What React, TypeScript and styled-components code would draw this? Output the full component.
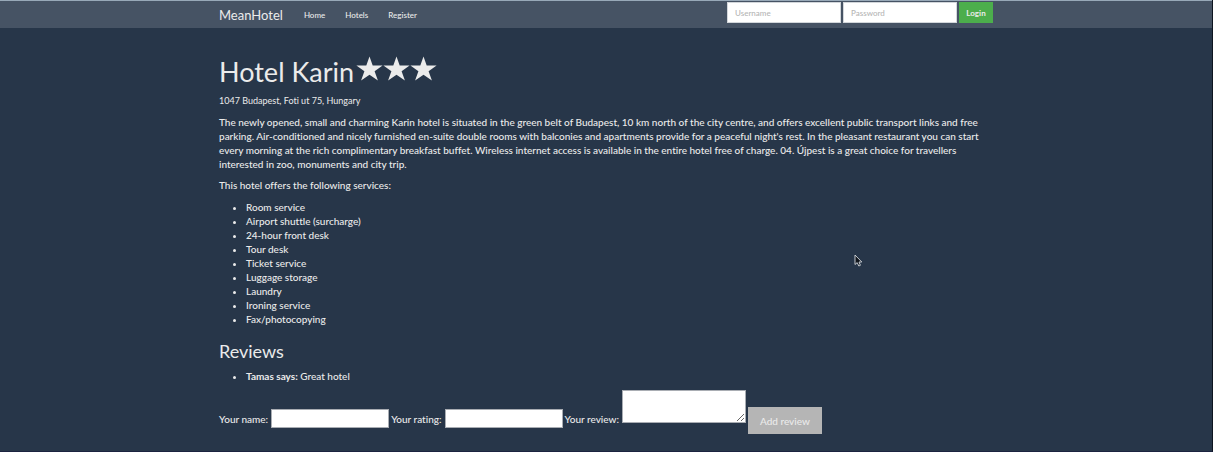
import React from "react";
import styled, { createGlobalStyle } from "styled-components";

const GlobalStyle = createGlobalStyle`
  *, *::before, *::after { box-sizing: border-box; }
  html, body { margin: 0; padding: 0; background: #273649; }
  body {
    font-family: Lato, "Liberation Sans", sans-serif;
    font-size: 10px;
    font-weight: 500;
    line-height: 14px;
    color: #ebebeb;
    font-variant-ligatures: none;
  }
  button, input, textarea { font-family: inherit; font-weight: inherit; }
`;

const Page = styled.div`
  min-height: 100vh;
  border-right: 1px solid #0e1520;
  border-bottom: 1px solid #1b2340;
`;

const Container = styled.div`
  width: 100%;
  max-width: 774px;
  margin: 0 auto;
`;

const Navbar = styled.header`
  background: #465364;
  border-top: 1px solid #98a9b8;
`;

const NavInner = styled(Container)`
  display: flex;
  align-items: flex-start;
  height: 27px;
`;

const Brand = styled.a`
  font-size: 13px;
  font-weight: 400;
  line-height: 28px;
  margin-right: 11px;
  color: #ebebeb;
  text-decoration: none;
`;

const NavLinks = styled.nav`
  display: flex;
  flex: 1;
`;

const NavLink = styled.a`
  padding: 0 10px;
  font-size: 8px;
  line-height: 28px;
  color: #ebebeb;
  text-decoration: none;
`;

const LoginForm = styled.form`
  display: flex;
  gap: 2px;
  padding-top: 1px;
`;

const LoginInput = styled.input`
  width: 114px;
  height: 21px;
  padding: 0 7px;
  border: 1px solid #d3d7db;
  border-radius: 0;
  background: #fff;
  color: #2b3e50;
  font-size: 8px;
  &::placeholder { color: #b5b5b5; opacity: 1; }
`;

const LoginButton = styled.button`
  width: 34px;
  height: 21px;
  padding: 0;
  border: 0;
  background: #4cae4c;
  color: #ebebeb;
  font-size: 8px;
  font-weight: 700;
`;

const Title = styled.h1`
  display: flex;
  align-items: center;
  gap: 2px;
  margin: 28px 0 0;
  font-size: 27px;
  line-height: 32px;
  font-weight: 400;
`;

const Stars = styled.span`
  display: flex;
  padding-bottom: 6px;
`;

const StarIcon = styled.svg`
  display: block;
  width: 27px;
  height: 26px;
  fill: #ebebeb;
`;

const Address = styled.p`
  margin: 6px 0 0;
  font-size: 9px;
  font-weight: 400;
`;

const Text = styled.p`
  margin: 7px 0 0;
`;

const List = styled.ul`
  margin: 8px 0 0;
  padding-left: 27px;
`;

const SectionTitle = styled.h2`
  margin: 15px 0 0;
  font-size: 18px;
  line-height: 20px;
  font-weight: 400;
`;

const ReviewForm = styled.form`
  display: flex;
  align-items: flex-end;
  gap: 2px;
  margin-top: 7px;
`;

const Field = styled.label`
  display: flex;
  align-items: center;
  gap: 3px;
  padding-bottom: 6px;
`;

const ReviewField = styled(Field)`
  align-items: flex-end;
  padding-bottom: 11px;
`;

const ReviewLabel = styled.span`
  line-height: 8px;
`;

const TextInput = styled.input`
  width: 118px;
  height: 19px;
  padding: 0 2px;
  border: 1px solid #a9adb3;
  background: #fff;
  color: #2b3e50;
  font-size: 10px;
`;

const TextArea = styled.textarea`
  display: block;
  width: 124px;
  height: 33px;
  padding: 2px;
  border: 1px solid #a9adb3;
  background: #fff;
  color: #2b3e50;
  font-size: 10px;
`;

const AddButton = styled.button`
  width: 74px;
  height: 27px;
  padding: 0;
  border: 0;
  background: #b5b5b5;
  color: #ebebeb;
  font-size: 10px;
`;

const Pointer = styled.svg`
  position: absolute;
  left: 854px;
  top: 254px;
  width: 9px;
  height: 13px;
  pointer-events: none;
`;

const services = [
  "Room service",
  "Airport shuttle (surcharge)",
  "24-hour front desk",
  "Tour desk",
  "Ticket service",
  "Luggage storage",
  "Laundry",
  "Ironing service",
  "Fax/photocopying",
];

const Star = () => (
  <StarIcon viewBox="0 0 27 26" aria-hidden="true">
    <path d="M13.5 0.5 L16.7 9.4 H26.6 L18.6 15.2 L21.9 24.5 L13.5 18.8 L5.1 24.5 L8.4 15.2 L0.4 9.4 H10.3 Z" />
  </StarIcon>
);

export default function App() {
  return (
    <Page>
      <GlobalStyle />
      <Navbar>
        <NavInner>
          <Brand href="#">MeanHotel</Brand>
          <NavLinks>
            <NavLink href="#home">Home</NavLink>
            <NavLink href="#hotels">Hotels</NavLink>
            <NavLink href="#register">Register</NavLink>
          </NavLinks>
          <LoginForm onSubmit={(e) => e.preventDefault()}>
            <LoginInput type="text" placeholder="Username" aria-label="Username" />
            <LoginInput type="password" placeholder="Password" aria-label="Password" />
            <LoginButton type="submit">Login</LoginButton>
          </LoginForm>
        </NavInner>
      </Navbar>
      <Container as="main">
        <Title>
          Hotel Karin
          <Stars role="img" aria-label="3 stars">
            <Star />
            <Star />
            <Star />
          </Stars>
        </Title>
        <Address>1047 Budapest, Foti ut 75, Hungary</Address>
        <Text>
          The newly opened, small and charming Karin hotel is situated in the green belt of Budapest,
          10 km north of the city centre, and offers excellent public transport links and free parking.
          Air-conditioned and nicely furnished en-suite double rooms with balconies and apartments
          provide for a peaceful night's rest. In the pleasant restaurant you can start every morning at
          the rich complimentary breakfast buffet. Wireless internet access is available in the entire
          hotel free of charge. 04. Újpest is a great choice for travellers interested in zoo, monuments
          and city trip.
        </Text>
        <Text>This hotel offers the following services:</Text>
        <List>
          {services.map((service) => (
            <li key={service}>{service}</li>
          ))}
        </List>
        <SectionTitle>Reviews</SectionTitle>
        <List>
          <li>
            <strong>Tamas says:</strong> Great hotel
          </li>
        </List>
        <ReviewForm onSubmit={(e) => e.preventDefault()}>
          <Field>
            Your name:
            <TextInput type="text" />
          </Field>
          <Field>
            Your rating:
            <TextInput type="text" />
          </Field>
          <ReviewField>
            <ReviewLabel>Your review:</ReviewLabel>
            <TextArea />
          </ReviewField>
          <AddButton type="submit">Add review</AddButton>
        </ReviewForm>
      </Container>
      <Pointer viewBox="0 0 9 13" aria-hidden="true">
        <path
          d="M1 1 V10.5 L3.2 8.6 L4.8 12 L6.4 11.3 L5 8 H7.8 Z"
          fill="#10151c"
          stroke="#d5d9de"
          strokeWidth="0.9"
        />
      </Pointer>
    </Page>
  );
}
